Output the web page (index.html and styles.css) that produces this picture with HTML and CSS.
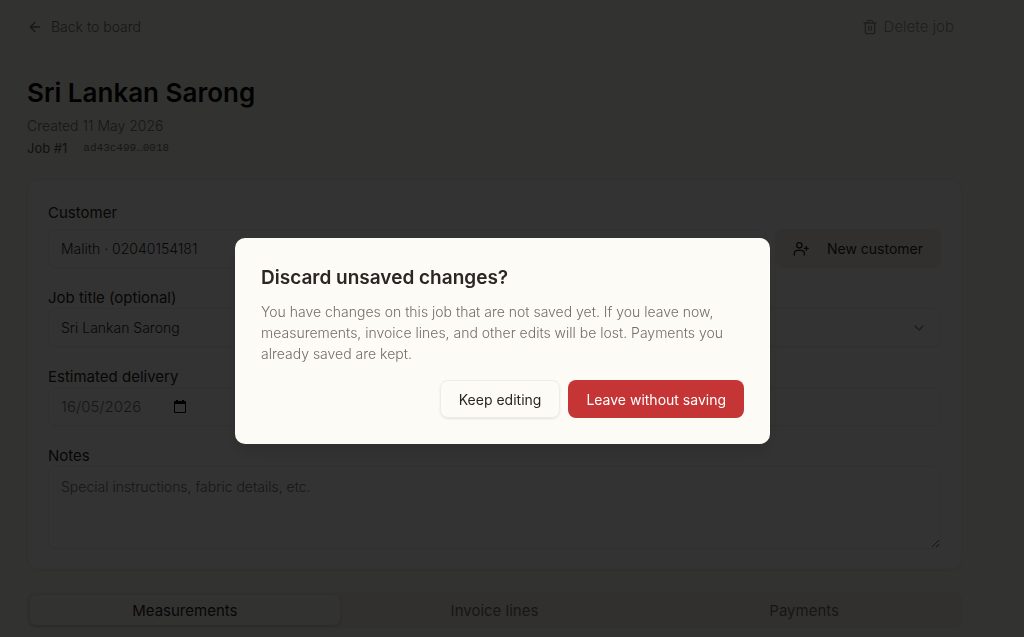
FILE: index.html
```
<!DOCTYPE html>
<html lang="en-GB">
<head>
    <meta charset="UTF-8">
    <meta name="viewport" content="width=device-width, initial-scale=1.0">
    <title>Sri Lankan Sarong</title>
    <link rel="stylesheet" href="styles.css">
</head>
<body>
    <main class="page">
        <div class="toolbar">
            <a class="tool-link" href="#">
                <svg class="icon" viewBox="0 0 24 24"><path d="m12 19-7-7 7-7M19 12H5"/></svg>
                Back to board
            </a>
            <button class="tool-link delete" type="button">
                <svg class="icon" viewBox="0 0 24 24"><path d="M3 6h18M19 6v14a2 2 0 0 1-2 2H7a2 2 0 0 1-2-2V6M8 6V4a2 2 0 0 1 2-2h4a2 2 0 0 1 2 2v2M10 11v6M14 11v6"/></svg>
                Delete job
            </button>
        </div>

        <header class="job-header">
            <h1>Sri Lankan Sarong</h1>
            <p class="created">Created 11 May 2026</p>
            <p class="job-ref"><span>Job #1</span><code>ad43c499…0018</code></p>
        </header>

        <form class="card">
            <div class="field">
                <label class="customer-label" for="customer">Customer</label>
                <div class="customer-row">
                    <div class="select-wrap">
                        <select id="customer"><option>Malith · 02040154181</option></select>
                        <svg class="icon chevron" viewBox="0 0 24 24"><path d="m6 9 6 6 6-6"/></svg>
                    </div>
                    <button class="new-customer" type="button">
                        <svg class="icon" viewBox="0 0 24 24"><path d="M2 21v-2a5 5 0 0 1 5-5h5a5 5 0 0 1 5 5v2M20 8v6M23 11h-6"/><circle cx="9.5" cy="6.5" r="4"/></svg>
                        New customer
                    </button>
                </div>
            </div>

            <div class="field">
                <label for="title">Job title (optional)</label>
                <div class="select-wrap">
                    <select id="title"><option>Sri Lankan Sarong</option></select>
                    <svg class="icon chevron" viewBox="0 0 24 24"><path d="m6 9 6 6 6-6"/></svg>
                </div>
            </div>

            <div class="field">
                <label for="delivery">Estimated delivery</label>
                <div class="date-box">
                    <input id="delivery" type="text" inputmode="numeric" value="16/05/2026">
                    <svg class="calendar" viewBox="0 0 14 14"><path d="M3 0h2v1h4V0h2v1h1a1 1 0 0 1 1 1v10a1 1 0 0 1-1 1H2a1 1 0 0 1-1-1V2a1 1 0 0 1 1-1h1zM2 4v8h10V4z" fill-rule="evenodd"/></svg>
                </div>
            </div>

            <div class="field">
                <label for="notes">Notes</label>
                <textarea id="notes" placeholder="Special instructions, fabric details, etc."></textarea>
            </div>
        </form>

        <div class="tabs" role="tablist">
            <button class="tab active" type="button" role="tab" aria-selected="true">Measurements</button>
            <button class="tab" type="button" role="tab" aria-selected="false">Invoice lines</button>
            <button class="tab" type="button" role="tab" aria-selected="false">Payments</button>
        </div>
    </main>

    <div class="overlay">
        <div class="dialog" role="alertdialog" aria-modal="true" aria-labelledby="dialog-title" aria-describedby="dialog-text">
            <h2 id="dialog-title">Discard unsaved changes?</h2>
            <p id="dialog-text">You have changes on this job that are not saved yet. If you leave now, measurements, invoice lines, and other edits will be lost. Payments you already saved are kept.</p>
            <div class="dialog-actions">
                <button class="btn btn-outline" type="button">Keep editing</button>
                <button class="btn btn-danger" type="button">Leave without saving</button>
            </div>
        </div>
    </div>
</body>
</html>
```
FILE: styles.css
```
:root {
    --background: #fbfaf5;
    --foreground: #2b2523;
    --muted: #776d69;
    --border: #efedea;
    --secondary: #f3ede6;
    --danger: #c53535;
}

* {
    margin: 0;
    padding: 0;
    box-sizing: border-box;
}

body {
    font-family: Inter, "Liberation Sans", sans-serif;
    font-size: 14px;
    line-height: 21px;
    background: var(--background);
    color: var(--foreground);
}

button, input, select, textarea {
    font: inherit;
    color: inherit;
}

button {
    border: none;
    background: none;
    cursor: pointer;
}

.icon {
    width: 16px;
    height: 16px;
    flex: none;
    fill: none;
    stroke: currentColor;
    stroke-width: 2;
    stroke-linecap: round;
    stroke-linejoin: round;
}

.page {
    padding: 16px 62px 8px 27px;
}

.toolbar {
    display: flex;
    justify-content: space-between;
    align-items: center;
}

.tool-link {
    display: flex;
    align-items: center;
    gap: 8px;
    font-weight: 300;
    color: var(--muted);
    text-decoration: none;
}

.delete {
    gap: 6px;
    padding-right: 8px;
    font-size: 15px;
    opacity: 0.7;
}

.job-header {
    margin: 38px 0 20px;
}

h1 {
    font-size: 26px;
    line-height: 36px;
    font-weight: 600;
    color: #0a0505;
}

.created {
    margin-top: 3px;
    font-weight: 300;
    line-height: 24px;
    color: var(--muted);
}

.job-ref {
    display: flex;
    gap: 16px;
    font-size: 13px;
    color: #5a504c;
}

.job-ref code {
    font-family: "Liberation Mono", monospace;
    font-size: 11px;
    color: var(--muted);
}

.card {
    display: flex;
    flex-direction: column;
    gap: 19px;
    padding: 22px 20px 20px;
    background: #fff;
    border: 1px solid var(--border);
    border-radius: 12px;
    box-shadow: 0 1px 3px rgba(0, 0, 0, 0.05);
}

.field {
    display: flex;
    flex-direction: column;
}

label {
    font-size: 15px;
}

.customer-label {
    margin-bottom: 6px;
}

.customer-row {
    display: flex;
    gap: 8px;
}

.select-wrap {
    position: relative;
    flex: 1;
}

select, .date-box, textarea {
    width: 100%;
    border: 1px solid var(--border);
    border-radius: 8px;
    background: #fff;
    font-weight: 300;
    box-shadow: 0 1px 2px rgba(0, 0, 0, 0.04);
}

select {
    display: block;
    appearance: none;
    height: 39px;
    padding: 0 12px;
}

.chevron {
    position: absolute;
    right: 14px;
    top: 12px;
    color: var(--muted);
    opacity: 0.8;
}

.new-customer {
    display: flex;
    align-items: center;
    gap: 18px;
    padding: 0 18px;
    height: 39px;
    background: var(--secondary);
    border-radius: 8px;
}

.date-box {
    display: flex;
    align-items: center;
    height: 39px;
    padding: 0 12px;
}

.date-box input {
    width: 112px;
    border: none;
    background: none;
    font-size: 15px;
    color: var(--muted);
}

.calendar {
    width: 14px;
    height: 14px;
    fill: #000;
}

textarea {
    display: block;
    height: 83px;
    padding: 9px 12px;
    resize: vertical;
}

textarea::placeholder {
    color: var(--muted);
}

.tabs {
    display: grid;
    grid-template-columns: repeat(3, 1fr);
    margin-top: 22px;
    padding: 3px;
    background: var(--secondary);
    border-radius: 8px;
}

.tab {
    height: 30px;
    border-radius: 6px;
    font-size: 15px;
    color: var(--muted);
}

.tab.active {
    background: var(--background);
    color: var(--foreground);
    box-shadow: 0 1px 3px rgba(0, 0, 0, 0.15);
}

/* Unsaved changes dialog */
.overlay {
    position: fixed;
    inset: 0;
    display: flex;
    align-items: center;
    justify-content: center;
    padding: 45px 19px 0 0;
    background: rgba(0, 0, 0, 0.8);
}

.dialog {
    width: 100%;
    max-width: 535px;
    padding: 26px;
    background: #fcfbf6;
    border-radius: 10px;
    box-shadow: 0 10px 15px rgba(0, 0, 0, 0.1);
}

.dialog h2 {
    font-size: 19px;
    line-height: 28px;
    font-weight: 600;
}

.dialog p {
    margin-top: 9px;
    font-weight: 300;
    color: var(--muted);
}

.dialog-actions {
    display: flex;
    justify-content: flex-end;
    gap: 8px;
    margin-top: 16px;
}

.btn {
    height: 38px;
    padding: 0 18px;
    border-radius: 8px;
}

.btn-outline {
    border: 1px solid var(--border);
    box-shadow: 0 1px 2px rgba(0, 0, 0, 0.1);
}

.btn-danger {
    background: var(--danger);
    color: #fff;
}
```
